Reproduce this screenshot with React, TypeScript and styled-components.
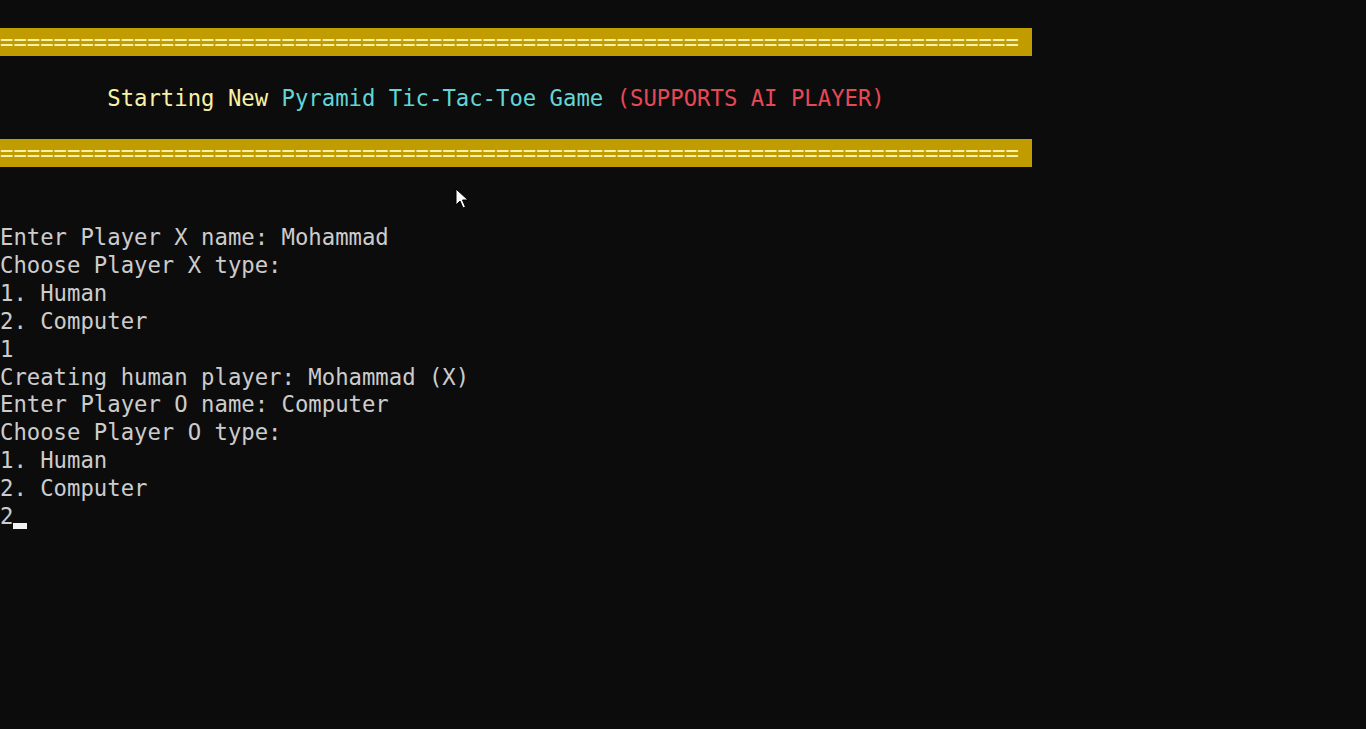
import React from "react";
import styled, { createGlobalStyle } from "styled-components";

const Global = createGlobalStyle`
  html, body {
    margin: 0;
    padding: 0;
    background: #0c0c0c;
  }
  #root {
    min-height: 729px;
  }
`;

const Terminal = styled.div`
  position: relative;
  width: 1366px;
  height: 729px;
  overflow: hidden;
  background: #0c0c0c;
  color: #cccccc;
  font-family: "DejaVu Sans Mono", "Liberation Mono", monospace;
  font-size: 22.28px;
  line-height: 27.9px;
  white-space: pre;
`;

const Line = styled.div`
  box-sizing: border-box;
  height: 27.9px;
  padding-top: 2px;
  display: flex;
  align-items: center;
`;

const Banner = styled.div`
  box-sizing: border-box;
  height: 27.9px;
  padding-top: 2px;
  width: max-content;
  background: #c19c00;
  color: #f9f1a5;
  display: flex;
  align-items: center;
`;

const Seg = styled.span<{ $tone: "yellow" | "cyan" | "red" | "plain" }>`
  color: ${(p) =>
    p.$tone === "yellow"
      ? "#f9f1a5"
      : p.$tone === "cyan"
      ? "#61d6d6"
      : p.$tone === "red"
      ? "#e74856"
      : "#cccccc"};
`;

const Caret = styled.span`
  display: inline-block;
  width: 13.4px;
  height: 6px;
  background: #f2f2f2;
  align-self: flex-end;
  margin-bottom: 1px;
`;

const Pointer = styled.svg`
  position: absolute;
  left: 455px;
  top: 188px;
  width: 14px;
  height: 22px;
`;

const lines = [
  "Enter Player X name: Mohammad",
  "Choose Player X type:",
  "1. Human",
  "2. Computer",
  "1",
  "Creating human player: Mohammad (X)",
  "Enter Player O name: Computer",
  "Choose Player O type:",
  "1. Human",
  "2. Computer",
];

const rule = "=".repeat(76) + " ";

export default function App() {
  return (
    <>
      <Global />
      <Terminal>
        <Line> </Line>
        <Banner>{rule}</Banner>
        <Line> </Line>
        <Line>
          <Seg $tone="yellow">{"        Starting New "}</Seg>
          <Seg $tone="cyan">{"Pyramid Tic-Tac-Toe Game "}</Seg>
          <Seg $tone="red">(SUPPORTS AI PLAYER)</Seg>
        </Line>
        <Line> </Line>
        <Banner>{rule}</Banner>
        <Line> </Line>
        <Line> </Line>
        {lines.map((l, i) => (
          <Line key={i}>{l}</Line>
        ))}
        <Line>
          2<Caret />
        </Line>
        <Pointer viewBox="0 0 14 22">
          <path
            d="M1 1 L1 17 L5 13 L8 20 L10.5 19 L7.5 12 L13 12 Z"
            fill="#ffffff"
            stroke="#000000"
            strokeWidth="1"
            strokeLinejoin="round"
          />
        </Pointer>
      </Terminal>
    </>
  );
}
